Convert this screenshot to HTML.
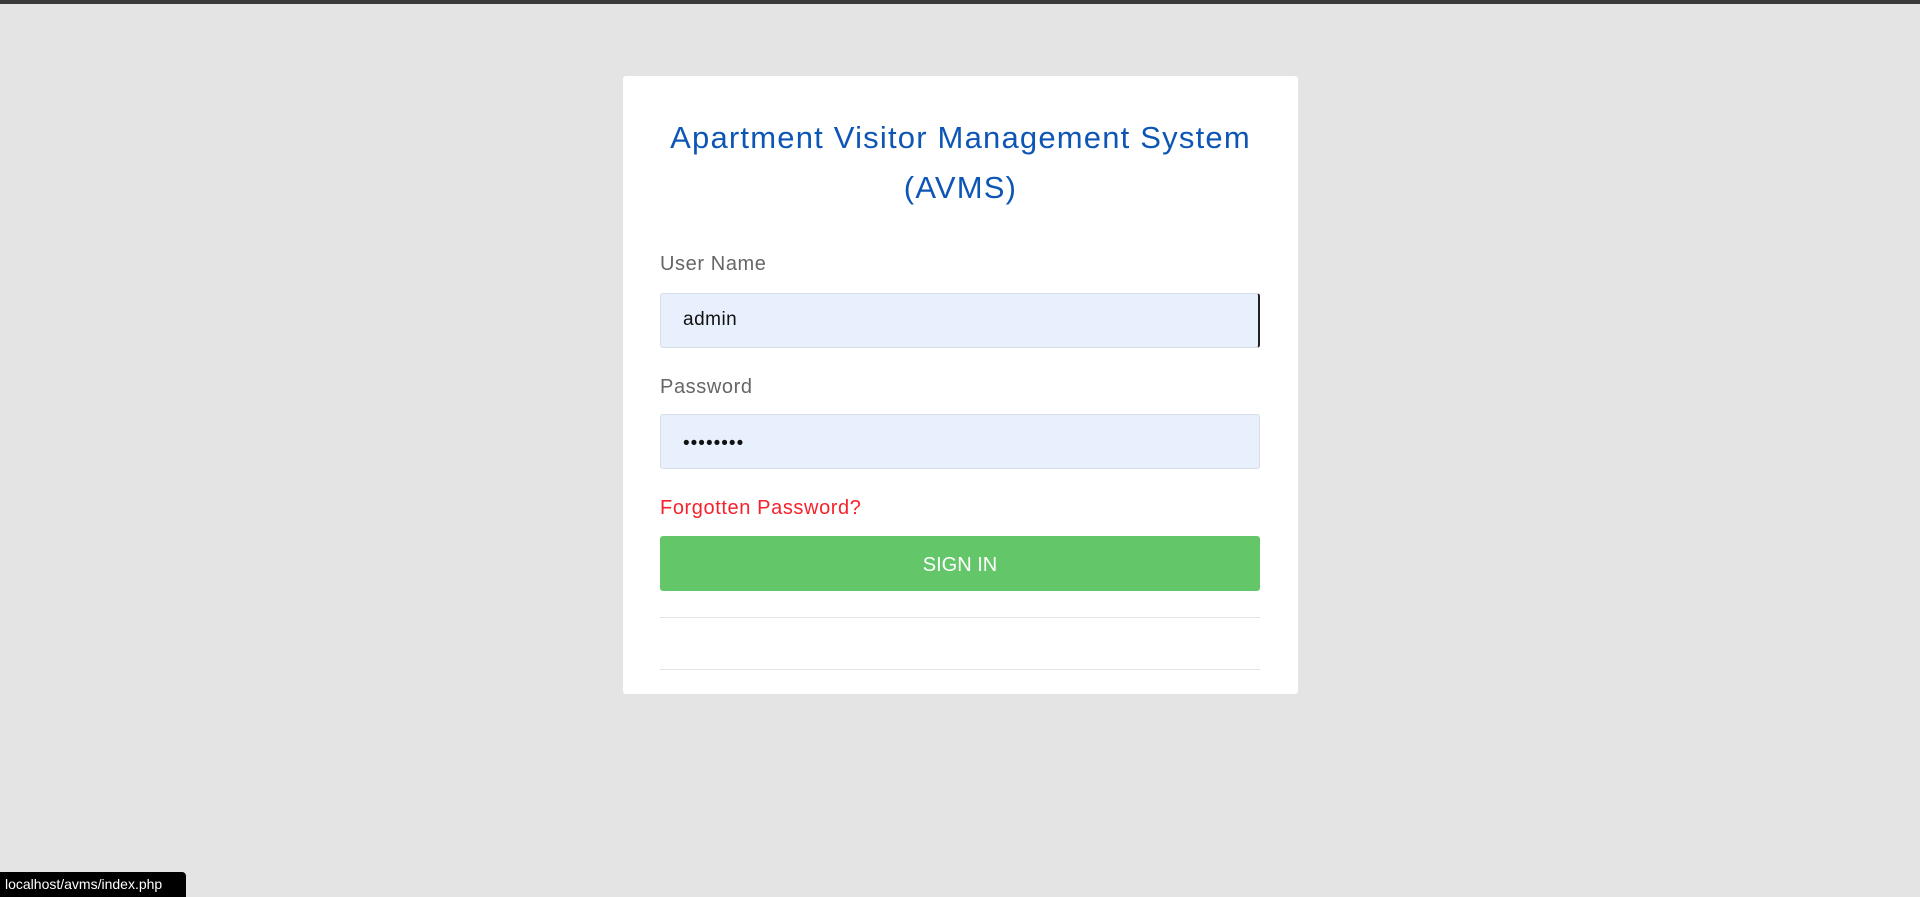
<!DOCTYPE html>
<html><head><style>
body{margin:0;width:1920px;height:897px;background:#e4e4e4;font-family:"Liberation Sans",sans-serif;position:relative;overflow:hidden}
.top{position:absolute;left:0;top:0;width:1920px;height:4px;background:#3a3a3a}
.card{position:absolute;left:623px;top:76px;width:675px;height:618px;background:#fff;border-radius:3px}
.t{position:absolute;left:0;width:675px;text-align:center;color:#0d56b5;font-size:31px;letter-spacing:1.2px}
.lbl{position:absolute;left:37px;color:#666;font-size:20px;letter-spacing:0.6px}
.inp{position:absolute;left:37px;width:600px;height:55px;background:#e8f0fe;border:1px solid #d6dde8;border-radius:3px;box-sizing:border-box}
.inp span{position:absolute;left:22px;top:15px;font-size:19px;color:#111;letter-spacing:0.5px}
.btn{position:absolute;left:37px;top:460px;width:600px;height:55px;background:#63c76a;border-radius:3px;color:#fff;font-size:20px;text-align:center;line-height:58px}
.hr{position:absolute;left:37px;width:600px;height:1px;background:#e4e4e4}
.st{position:absolute;left:0;top:872px;width:186px;height:25px;background:#000;color:#fff;font-size:14px;line-height:25px;padding-left:5px;box-sizing:border-box;border-top-right-radius:4px}
</style></head><body>
<div class="top"></div>
<div class="card">
<div class="t" style="top:44px">Apartment Visitor Management System</div>
<div class="t" style="top:94px">(AVMS)</div>
<div class="lbl" style="top:177px">User Name</div>
<div class="inp" style="top:217px;border-right:2px solid #222"><span>admin</span></div>
<div class="lbl" style="top:300px">Password</div>
<div class="inp" style="top:338px"><span style="letter-spacing:1px;top:18px">••••••••</span></div>
<div class="lbl" style="top:421px;color:#f5222d">Forgotten Password?</div>
<div class="btn">SIGN IN</div>
<div class="hr" style="top:541px"></div>
<div class="hr" style="top:593px"></div>
</div>
<div class="st">localhost/avms/index.php</div>
</body></html>
